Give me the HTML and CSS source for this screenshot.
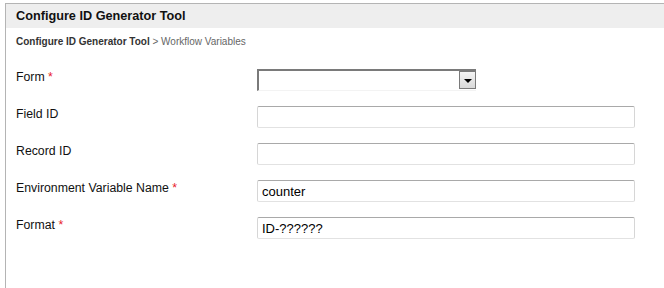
FILE: index.html
```html
<!DOCTYPE html>
<html lang="en">
<head>
    <meta charset="UTF-8">
    <title>Configure ID Generator Tool</title>
    <link rel="stylesheet" href="styles.css">
</head>
<body>
    <div class="frame">
        <div class="header">Configure ID Generator Tool</div>
        <div class="crumb"><strong>Configure ID Generator Tool</strong> &gt; Workflow Variables</div>

        <div class="form">
            <label class="label">Form <span class="req">*</span></label>
            <div class="select">
                <span class="select-value"></span>
                <span class="select-btn"><span class="arrow"></span></span>
            </div>

            <label class="label">Field ID</label>
            <input class="text" type="text" value="">

            <label class="label">Record ID</label>
            <input class="text" type="text" value="">

            <label class="label">Environment Variable Name <span class="req">*</span></label>
            <input class="text" type="text" value="counter">

            <label class="label">Format <span class="req">*</span></label>
            <input class="text" type="text" value="ID-??????">
        </div>
    </div>
</body>
</html>
```

FILE: styles.css
```css
* {
    margin: 0;
    padding: 0;
    box-sizing: border-box;
}

body {
    background: #fff;
    color: #000;
    font-family: 'Liberation Sans', Arial, sans-serif;
    font-size: 12px;
}

.frame {
    margin: 3px 0 0 5px;
    min-height: 285px;
    border-top: 1px solid #b4b4b4;
    border-left: 1px solid #b4b4b4;
}

.header {
    height: 24px;
    line-height: 24px;
    padding-left: 10px;
    background: #eeeeee;
    font-weight: bold;
    font-size: 12.7px;
    color: #111;
}

.crumb {
    padding: 7px 10px 0;
    font-size: 10px;
    line-height: 14px;
    color: #666;
}

.crumb strong {
    color: #333;
}

.form {
    display: grid;
    grid-template-columns: 241px 378px;
    grid-auto-rows: 22px;
    row-gap: 15px;
    padding: 20px 10px 0;
}

.label {
    line-height: 16px;
    font-size: 12.3px;
    color: #111;
}

.req {
    color: #e8202a;
}

.text {
    width: 378px;
    height: 22px;
    padding: 0 4px;
    border: 1px solid #d6d6d6;
    border-top-color: #a9a9a9;
    border-bottom-color: #e2e2e2;
    border-radius: 2px;
    font-family: 'Liberation Sans', Arial, sans-serif;
    font-size: 13px;
    color: #000;
    outline: none;
}

.select {
    display: flex;
    width: 219px;
    height: 22px;
    border-top: 2px solid #7a7a7a;
    border-left: 2px solid #7a7a7a;
    border-bottom: 1px solid #f3f3f3;
    background: #fff;
}

.select-value {
    flex: 1;
}

.select-btn {
    display: flex;
    align-items: center;
    justify-content: center;
    width: 17px;
    height: 18px;
    border: 1px solid #7a7a7a;
    background: linear-gradient(#f4f4f4, #d9d9d9);
}

.arrow {
    width: 0;
    height: 0;
    border-left: 4px solid transparent;
    border-right: 4px solid transparent;
    border-top: 4px solid #000;
    margin-top: 1px;
}
```
